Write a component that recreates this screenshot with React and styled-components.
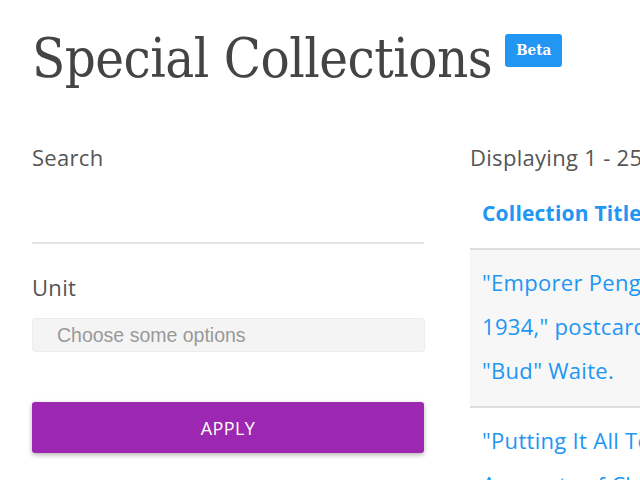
import React from "react";
import styled, { createGlobalStyle } from "styled-components";

const GlobalStyle = createGlobalStyle`
  html, body {
    margin: 0;
    padding: 0;
    background: #fff;
    overflow: hidden;
  }
  body {
    font-family: "Open Sans", Lato, sans-serif;
    color: #555;
  }
`;

const rows = [
  {
    lines: ['"Emporer Penguins, Little America,', '1934," postcard by Amory H.', '"Bud" Waite.'],
    shaded: true,
  },
  {
    lines: ['"Putting It All Together" collection:', "Accounts of Change"],
    shaded: false,
  },
];

const App = () => {
  return (
    <>
      <GlobalStyle />
      <Page>
        <Header>
          <Title>Special Collections</Title>
          <Badge>Beta</Badge>
        </Header>
        <Columns>
          <Filters>
            <Label>Search</Label>
            <SearchInput type="text" />
            <Label>Unit</Label>
            <Select>Choose some options</Select>
            <ApplyBtn>APPLY</ApplyBtn>
          </Filters>
          <Results>
            <Count>Displaying 1 - 25 of 312</Count>
            <Table>
              <thead>
                <tr>
                  <HeadCell>Collection Title</HeadCell>
                </tr>
              </thead>
              <tbody>
                {rows.map((row, idx) => (
                  <Row key={idx} $shaded={row.shaded}>
                    <Cell>
                      {row.lines.map((line, i) => (
                        <Line key={i}>{line}</Line>
                      ))}
                    </Cell>
                  </Row>
                ))}
              </tbody>
            </Table>
          </Results>
        </Columns>
      </Page>
    </>
  );
};

const Page = styled.div`
  width: 900px;
  padding: 0 32px;
`;

const Header = styled.div`
  display: flex;
  align-items: flex-start;
  padding-top: 24px;
  height: 96px;
  box-sizing: border-box;
`;

const Title = styled.h1`
  margin: 0;
  font-family: "DejaVu Serif", serif;
  font-stretch: condensed;
  font-weight: normal;
  font-size: 54px;
  line-height: 70px;
  color: #444;
  letter-spacing: -0.5px;
`;

const Badge = styled.span`
  margin: 10px 0 0 13px;
  background: #2196f3;
  color: #fff;
  font-family: "DejaVu Serif", serif;
  font-stretch: condensed;
  font-weight: bold;
  font-size: 15px;
  line-height: 33px;
  padding: 0 11px;
  border-radius: 3px;
`;

const Columns = styled.div`
  display: flex;
  gap: 46px;
  padding-top: 48px;
`;

const Filters = styled.div`
  width: 392px;
  flex-shrink: 0;
  display: flex;
  flex-direction: column;
`;

const Label = styled.label`
  font-size: 22px;
  line-height: 26px;
  letter-spacing: 0.3px;
  color: #555;
`;

const SearchInput = styled.input`
  border: none;
  border-bottom: 2px solid #e2e2e2;
  height: 74px;
  box-sizing: border-box;
  margin-bottom: 30px;
  outline: none;
  padding: 0;
  background: transparent;
`;

const Select = styled.div`
  margin-top: 18px;
  height: 34px;
  box-sizing: border-box;
  background: #f4f4f4;
  border: 1px solid #ededed;
  border-radius: 3px;
  padding-left: 24px;
  display: flex;
  align-items: center;
  font-family: "Liberation Sans", Arial, sans-serif;
  font-size: 19.5px;
  color: #999;
  width: 393px;
`;

const ApplyBtn = styled.button`
  margin-top: 50px;
  height: 51px;
  border: none;
  border-radius: 3px;
  background: #9c27b0;
  color: #fff;
  font-family: "Open Sans", sans-serif;
  font-size: 18px;
  letter-spacing: 0.4px;
  box-shadow: 0 2px 5px rgba(0, 0, 0, 0.3);
`;

const Results = styled.div`
  flex: 1;
`;

const Count = styled.div`
  font-size: 22px;
  line-height: 26px;
  letter-spacing: 0.3px;
  color: #555;
`;

const Table = styled.table`
  width: 100%;
  margin-top: 20px;
  border-collapse: separate;
  border-spacing: 0;
`;

const HeadCell = styled.th`
  text-align: left;
  color: #2196f3;
  font-size: 21px;
  line-height: 26px;
  font-weight: bold;
  letter-spacing: 0.2px;
  padding: 10px 12px 22px;
  border-bottom: 2px solid #ddd;
`;

const Row = styled.tr`
  background: ${(p) => (p.$shaded ? "#f7f7f7" : "#fff")};
`;

const Cell = styled.td`
  padding: 10px 12px 14px;
  border-bottom: 2px solid #ddd;
`;

const Line = styled.div`
  color: #2196f3;
  font-size: 22px;
  line-height: 44px;
  letter-spacing: 0.3px;
  white-space: nowrap;
`;

export default App;
